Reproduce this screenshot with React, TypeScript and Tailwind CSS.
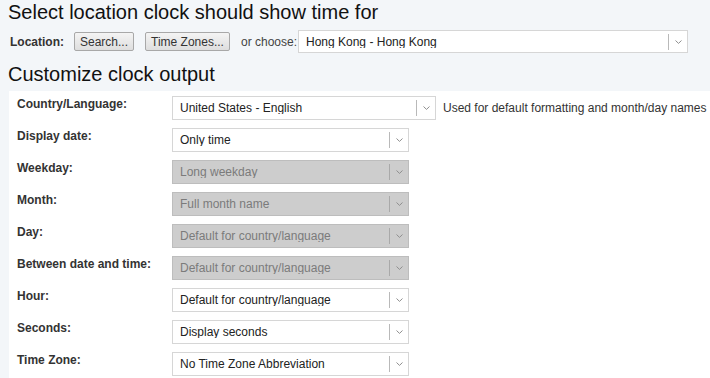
import React from "react";

type Row = {
  label: string;
  value: string;
  disabled?: boolean;
  wide?: boolean;
  help?: string;
};

const rows: Row[] = [
  {
    label: "Country/Language:",
    value: "United States - English",
    wide: true,
    help: "Used for default formatting and month/day names",
  },
  { label: "Display date:", value: "Only time" },
  { label: "Weekday:", value: "Long weekday", disabled: true },
  { label: "Month:", value: "Full month name", disabled: true },
  { label: "Day:", value: "Default for country/language", disabled: true },
  { label: "Between date and time:", value: "Default for country/language", disabled: true },
  { label: "Hour:", value: "Default for country/language" },
  { label: "Seconds:", value: "Display seconds" },
  { label: "Time Zone:", value: "No Time Zone Abbreviation" },
];

function Chevron() {
  return (
    <svg width="9" height="6" viewBox="0 0 9 6" className="block">
      <path d="M1.5 1.5 L4.5 4.4 L7.5 1.5" fill="none" stroke="#8f8f8f" strokeWidth="1" />
    </svg>
  );
}

function FakeSelect({
  value,
  disabled,
  className,
}: {
  value: string;
  disabled?: boolean;
  className: string;
}) {
  return (
    <div
      className={`flex items-center border ${
        disabled
          ? "border-[#bdbdbd] bg-[#cdcdcd] text-[#7b7b7b]"
          : "border-[#d6d6d6] bg-white text-[#222]"
      } ${className}`}
    >
      <span className="flex-1 truncate pl-[7px] text-[12px] leading-none">{value}</span>
      <span
        className={`h-[16px] w-px ${disabled ? "bg-[#a9a9a9]" : "bg-[#b9b9b9]"}`}
      />
      <span className="flex w-[18px] justify-center">
        <Chevron />
      </span>
    </div>
  );
}

function Button({ children }: { children: React.ReactNode }) {
  return (
    <button className="h-[19px] rounded-[2px] border border-[#a8a8a8] bg-gradient-to-b from-[#f4f4f4] to-[#dedede] px-[5px] text-[12px] leading-none text-[#333]">
      {children}
    </button>
  );
}

export default function App() {
  return (
    <div
      className="min-h-[378px] w-[710px] overflow-hidden bg-[#f3f6f9] text-[#222]"
      style={{ fontFamily: '"Liberation Sans", Arial, sans-serif' }}
    >
      <h1 className="pl-[8px] pt-px text-[20px] leading-[23px] font-normal text-[#111]">
        Select location clock should show time for
      </h1>

      <div className="mt-[6px] flex h-[23px] items-center pl-[10px] pr-[22px] text-[12px]">
        <span className="w-[64px] font-bold text-[#333]">Location:</span>
        <Button>Search...</Button>
        <span className="w-[11px]" />
        <Button>Time Zones...</Button>
        <span className="ml-[11px] mr-px text-[#444]">or choose:</span>
        <FakeSelect value="Hong Kong - Hong Kong" className="h-[23px] flex-1" />
      </div>

      <h2 className="mt-[10px] pl-[8px] text-[20px] leading-[23px] font-normal text-[#111]">
        Customize clock output
      </h2>

      <div className="ml-[9px] mt-[5px] flex flex-col gap-[8px] bg-white pb-[10px] pl-[8px] pt-[5px]">
        {rows.map((row) => (
          <div key={row.label} className="flex items-start">
            <span className="w-[155px] text-[12px] leading-[16px] font-bold text-[#333]">
              {row.label}
            </span>
            <FakeSelect
              value={row.value}
              disabled={row.disabled}
              className={`h-[24px] ${row.wide ? "w-[264px]" : "w-[237px]"}`}
            />
            {row.help && (
              <span className="ml-[7px] self-center text-[12px] text-[#333]">{row.help}</span>
            )}
          </div>
        ))}
      </div>
    </div>
  );
}
